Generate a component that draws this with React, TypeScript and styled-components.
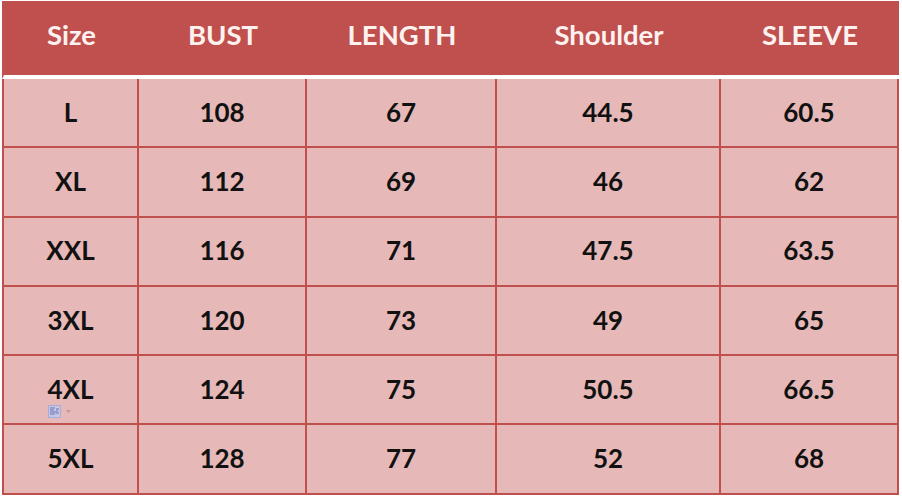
import React from "react";
import styled, { createGlobalStyle } from "styled-components";

const Global = createGlobalStyle`
  html, body { margin: 0; padding: 0; background: #ffffff; }
  body { font-family: Lato, "Open Sans", sans-serif; }
`;

const COLS = "135px 168px 190px 224px 178px";
const RED = "#C0504D";
const PINK = "#E6B8B7";

const Page = styled.div`
  width: 902px;
  height: 496px;
  padding: 1px 0 0 2px;
  box-sizing: border-box;
  background: #fff;
`;

const Table = styled.div`
  width: 897px;
  display: flex;
  flex-direction: column;
`;

const HeaderRow = styled.div`
  display: grid;
  grid-template-columns: ${COLS};
  height: 74px;
  background: ${RED};
  border-left: 2px solid ${RED};
  border-bottom: 4px solid #ffffff;
`;

const HeaderCell = styled.div`
  display: flex;
  align-items: center;
  justify-content: center;
  color: #fdf2f0;
  font-family: Lato, "Open Sans", sans-serif;
  font-weight: 700;
  font-size: 27.5px;
  padding-bottom: 7px;
`;

const Body = styled.div`
  display: grid;
  grid-template-columns: ${COLS};
  grid-auto-rows: 69.3px;
  border-left: 2px solid ${RED};
  background: ${PINK};
`;

const Cell = styled.div`
  position: relative;
  display: flex;
  align-items: center;
  justify-content: center;
  background: ${PINK};
  border-right: 2px solid ${RED};
  border-bottom: 2px solid ${RED};
  color: #111111;
  font-family: Lato, "Open Sans", sans-serif;
  font-weight: 700;
  font-size: 26px;
  padding-bottom: 2px;
`;

const PasteTag = styled.div`
  position: absolute;
  left: 44px;
  top: 49px;
  display: flex;
  align-items: center;
  gap: 5px;
`;

const PasteIcon = () => (
  <svg width="13" height="13" viewBox="0 0 13 13">
    <rect x="0" y="0" width="13" height="13" fill="#a9acd6" />
    <rect x="1" y="1" width="11" height="11" fill="#c4c6e6" />
    <path d="M2 3h5M2 5h4M2 7h6M2 9h5M8 4h3M8 6h2M8 8h3" stroke="#6f73b5" strokeWidth="1" />
  </svg>
);

const Caret = () => (
  <svg width="5" height="3" viewBox="0 0 5 3">
    <path d="M0 0h5L2.5 3z" fill="#b89a9a" />
  </svg>
);

const headers = ["Size", "BUST", "LENGTH", "Shoulder", "SLEEVE"];
const rows = [
  ["L", "108", "67", "44.5", "60.5"],
  ["XL", "112", "69", "46", "62"],
  ["XXL", "116", "71", "47.5", "63.5"],
  ["3XL", "120", "73", "49", "65"],
  ["4XL", "124", "75", "50.5", "66.5"],
  ["5XL", "128", "77", "52", "68"],
];

export default function App() {
  return (
    <Page>
      <Global />
      <Table>
        <HeaderRow>
          {headers.map((h) => (
            <HeaderCell key={h}>{h}</HeaderCell>
          ))}
        </HeaderRow>
        <Body>
          {rows.map((r, ri) =>
            r.map((v, ci) => (
              <Cell key={`${ri}-${ci}`}>
                {v}
                {ri === 4 && ci === 0 && (
                  <PasteTag>
                    <PasteIcon />
                    <Caret />
                  </PasteTag>
                )}
              </Cell>
            ))
          )}
        </Body>
      </Table>
    </Page>
  );
}
